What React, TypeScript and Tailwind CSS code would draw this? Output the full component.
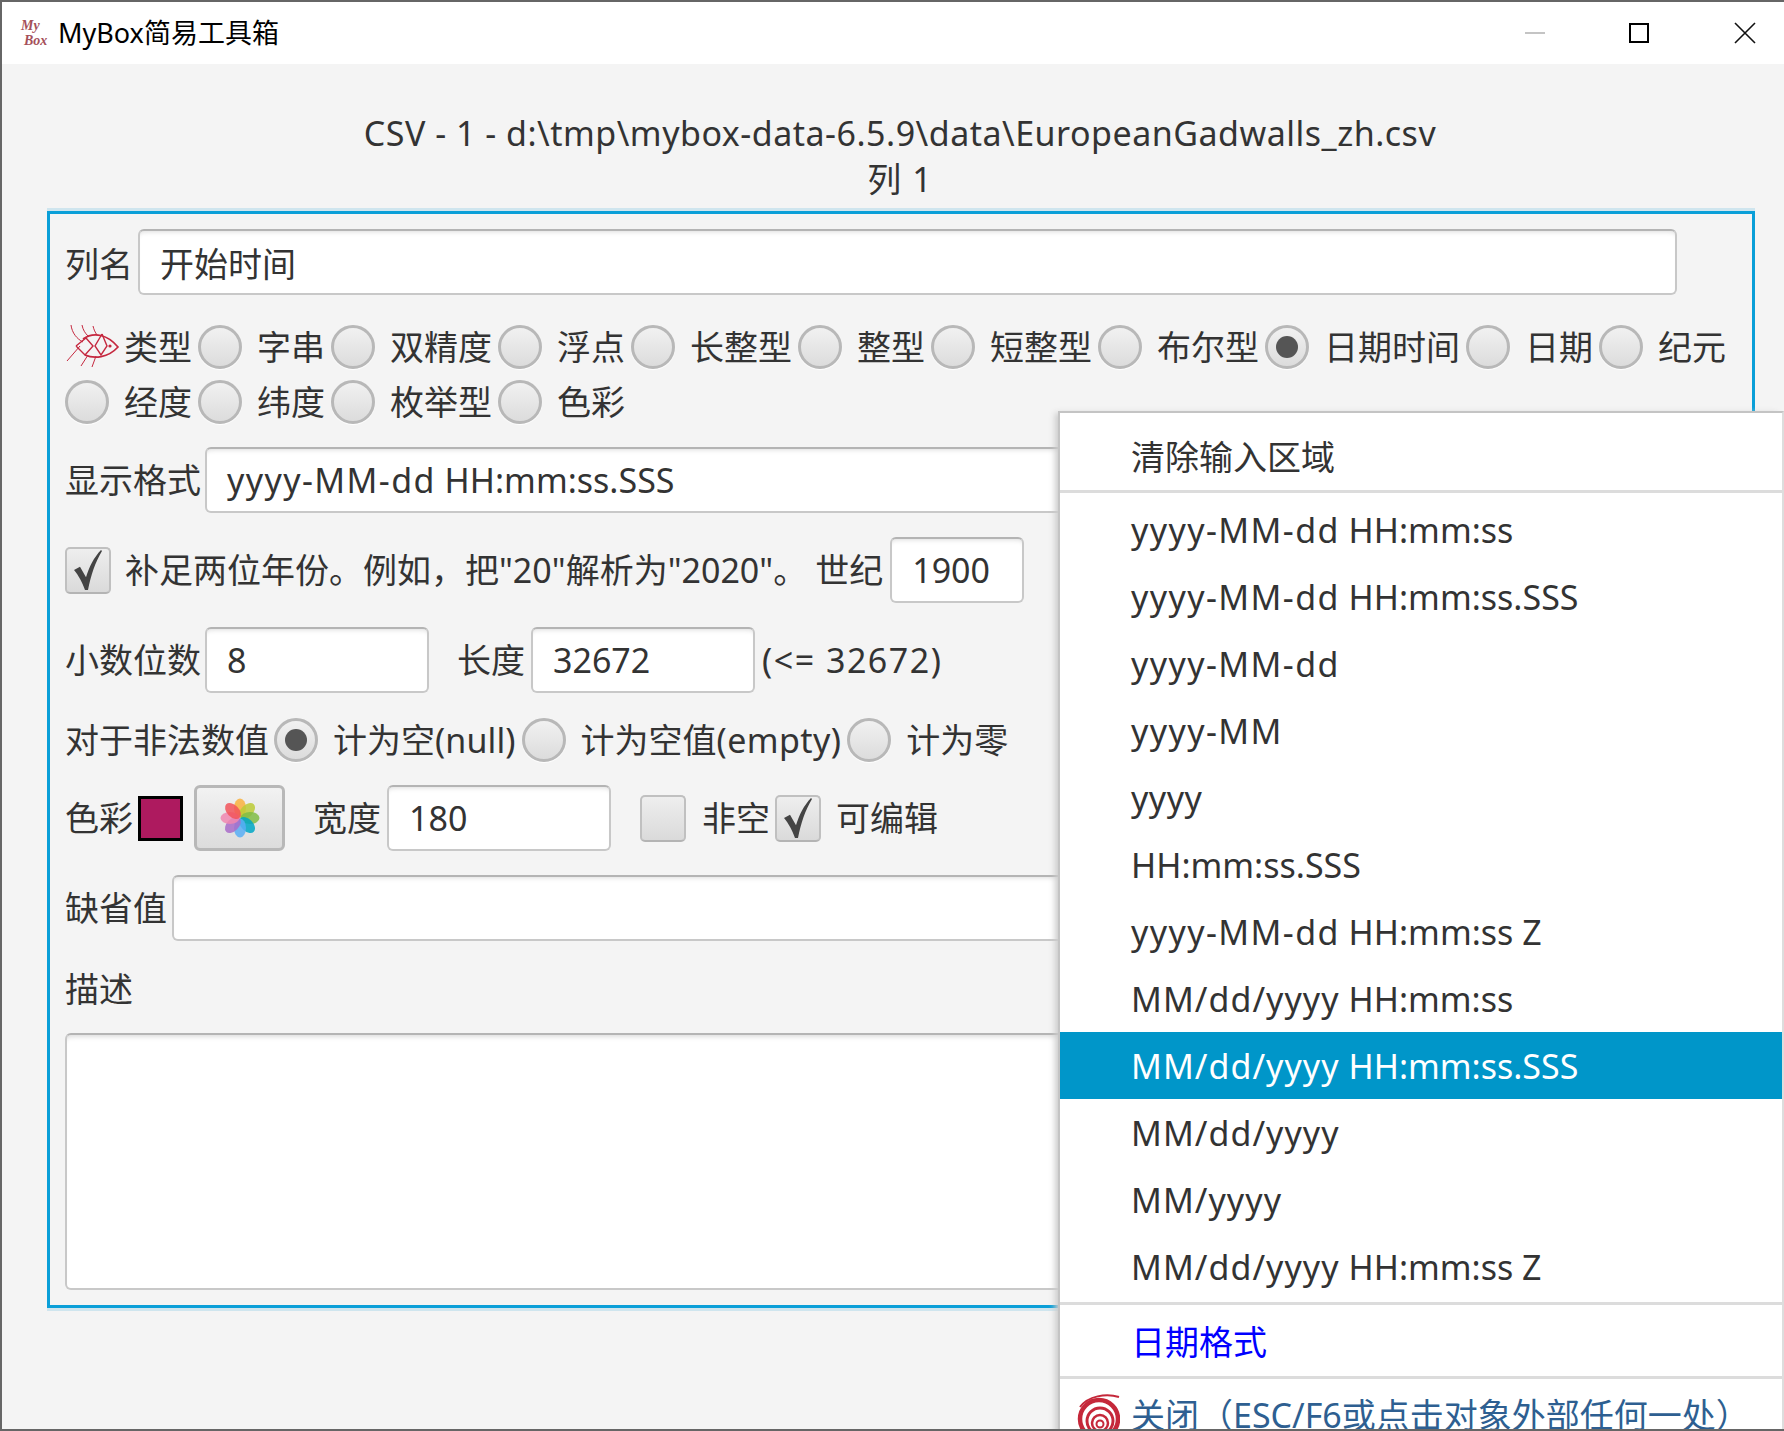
import React from "react";

const inputCls =
  "h-[66px] bg-white rounded-[6px] border-2 border-[#c8c8c8] border-t-[#b4b4b4] shadow-[inset_0_5px_5px_-4px_#dddddd] flex items-center text-[34px] text-[#333333] pl-[20px] shrink-0 whitespace-nowrap overflow-hidden";

function Radio({ on }: { on?: boolean }) {
  return (
    <span className="w-[44px] h-[44px] shrink-0 rounded-full border-[3px] border-[#b8b8b8] bg-gradient-to-b from-[#f1f1f1] to-[#dcdcdc] shadow-[0_1px_1px_#ffffff] flex items-center justify-center">
      {on && <span className="w-[22px] h-[22px] rounded-full bg-[#555555]" />}
    </span>
  );
}

function Check({ on }: { on?: boolean }) {
  return (
    <span className="w-[46px] h-[47px] shrink-0 rounded-[5px] border-2 border-[#c0c0c0] border-b-[#b4b4b4] bg-gradient-to-b from-[#eeeeee] to-[#dadada] flex items-center justify-center">
      {on && (
        <svg width="30" height="40" viewBox="0 0 30 38" preserveAspectRatio="none">
          <path d="M1 19 L7 16 L13 26 C16 16 21 7 28 0 L29 1 C22 12 18 24 15 38 L12 38 C9 30 6 25 1 19 Z" fill="#444444" />
        </svg>
      )}
    </span>
  );
}

function Fish() {
  return (
    <svg width="55" height="47" viewBox="15 15 55 47" fill="none" stroke="#c5283f" className="shrink-0 -my-[2px]">
      <path d="M33 30 C44 22 58 26 68 38 C58 49 44 50 35 46" strokeWidth="1.7" />
      <path d="M26 37 L36 29 L43 37 L35 46 L26 37" strokeWidth="1.4" />
      <path d="M52 25 L45 37 L51 46 L57 37 L52 25" strokeWidth="1.4" />
      <path d="M21 16 C22 24 27 30 33 33 M32 16 C33 21 35 24 38 27 M43 17 C44 21 45 23 47 26" strokeWidth="1" />
      <path d="M17 52 L30 37 M31 57 L38 46 M42 58 L46 47" strokeWidth="1" />
      <circle cx="60" cy="37" r="1.6" fill="#c5283f" stroke="none" />
    </svg>
  );
}

function Flower() {
  const colors = ["#f9b13e", "#bccb36", "#80bc45", "#00a7c6", "#58aef5", "#a96cc9", "#f087b0", "#f2545b"];
  return (
    <svg width="40" height="40" viewBox="-20 -20 40 40">
      {colors.map((c, i) => (
        <ellipse key={c} cx="0" cy="-10" rx="6" ry="9.5" fill={c} fillOpacity="0.85" transform={`rotate(${i * 45})`} />
      ))}
    </svg>
  );
}

function Swirl() {
  return (
    <svg width="44" height="44" viewBox="0 0 44 44" fill="none" stroke="#c5283a" className="shrink-0">
      <path d="M43 4 C30 0 12 3 4 14" strokeWidth="2" />
      <circle cx="23" cy="26" r="19" strokeWidth="4.5" />
      <circle cx="24" cy="28" r="13" strokeWidth="3" />
      <circle cx="24" cy="30" r="8" strokeWidth="2.5" />
      <circle cx="24" cy="31" r="3.5" strokeWidth="2" />
    </svg>
  );
}

const types = ["字串", "双精度", "浮点", "长整型", "整型", "短整型", "布尔型", "日期时间", "日期", "纪元", "经度", "纬度", "枚举型", "色彩"];
const formats = [
  "yyyy-MM-dd HH:mm:ss",
  "yyyy-MM-dd HH:mm:ss.SSS",
  "yyyy-MM-dd",
  "yyyy-MM",
  "yyyy",
  "HH:mm:ss.SSS",
  "yyyy-MM-dd HH:mm:ss Z",
  "MM/dd/yyyy HH:mm:ss",
  "MM/dd/yyyy HH:mm:ss.SSS",
  "MM/dd/yyyy",
  "MM/yyyy",
  "MM/dd/yyyy HH:mm:ss Z",
];

function Format({ f }: { f: string }) {
  const i = f.indexOf(" ");
  const head = i < 0 ? f : f.slice(0, i);
  const tail = i < 0 ? "" : f.slice(i);
  if (head.includes(":")) return <span>{f}</span>;
  const track = head.includes("-")
    ? "tracking-[1.4px]"
    : head.includes("/")
      ? "tracking-[1.05px]"
      : "tracking-[0.5px]";
  return (
    <span className="whitespace-pre">
      <span className={track}>{head}</span>
      {tail}
    </span>
  );
}

export default function App() {
  return (
    <div className="relative w-[1784px] h-[1431px] overflow-hidden flex flex-col bg-[#f4f4f4] border-t-2 border-l-2 border-b-2 border-[#666666] font-['Noto_Sans','Noto_Sans_CJK_SC',sans-serif] text-[34px] leading-[46px] text-[#333333]">
      <header className="h-[62px] shrink-0 bg-white flex items-center text-black">
        <div className="ml-[17px] w-[34px] flex flex-col font-['Liberation_Serif',serif] italic font-bold text-[14px] leading-[15px] text-[#a5505a]">
          <span className="ml-[2px]">My</span>
          <span className="ml-[5px]">Box</span>
        </div>
        <span className="ml-[5px] text-[27px] leading-[36px]">MyBox简易工具箱</span>
        <div className="ml-auto flex items-center">
          <span className="w-[20px] h-[2px] bg-[#c4c4c4] mr-[84px]" />
          <span className="w-[20px] h-[20px] border-2 border-black mr-[85px]" />
          <svg width="22" height="22" viewBox="0 0 22 22" className="mr-[28px]" stroke="#111111" strokeWidth="1.6">
            <path d="M1 1 L21 21 M21 1 L1 21" />
          </svg>
        </div>
      </header>

      <main className="flex-1 flex flex-col pt-[46px]">
        <div className="text-center pl-[14px] tracking-[0.5px]">CSV - 1 - d:\tmp\mybox-data-6.5.9\data\EuropeanGadwalls_zh.csv</div>
        <div className="text-center pl-[14px] tracking-[1px]">列 1</div>
        <section className="mt-[9px] ml-[45px] w-[1708px] h-[1097px] border-[3px] border-[#0a9fd8] shadow-[0_-3px_0_#cfe5ee,0_3px_0_#cfe5ee] px-[15px] pt-[15px] flex flex-col">
          <div className="flex items-center gap-[5px]">
            <span className="pt-[3px]">列名</span>
            <div className={inputCls + " w-[1539px] pt-[3px]"}>开始时间</div>
          </div>

          <div className="mt-[30px] flex flex-wrap gap-y-[11px] items-center">
            <div className="flex items-center mr-[6px]">
              <Fish />
              <span className="ml-[4px] leading-[44px]">类型</span>
            </div>
            {types.map((t) => (
              <div key={t} className="flex items-center mr-[6px]">
                <Radio on={t === "日期时间"} />
                <span className="ml-[15px] leading-[44px]">{t}</span>
              </div>
            ))}
          </div>

          <div className="mt-[23px] flex items-center gap-[4px]">
            <span>显示格式</span>
            <div className={inputCls + " w-[1474px]"}>
              <Format f="yyyy-MM-dd HH:mm:ss.SSS" />
            </div>
          </div>

          <div className="mt-[24px] flex items-center">
            <Check on />
            <span className="ml-[14px] whitespace-nowrap">补足两位年份。例如，把"20"解析为"2020"。<span className="ml-[8px]">世纪</span></span>
            <div className={inputCls + " w-[134px] ml-[7px]"}>1900</div>
          </div>

          <div className="mt-[24px] flex items-center">
            <span>小数位数</span>
            <div className={inputCls + " w-[224px] ml-[4px]"}>8</div>
            <span className="ml-[28px]">长度</span>
            <div className={inputCls + " w-[224px] ml-[6px]"}>32672</div>
            <span className="ml-[7px] whitespace-nowrap tracking-[1.5px]">(&lt;= 32672)</span>
          </div>

          <div className="mt-[25px] flex items-center leading-[44px]">
            <span>对于非法数值</span>
            <span className="ml-[5px]"><Radio on /></span>
            <span className="ml-[15px] whitespace-nowrap">计为空<span className="tracking-[0.1px]">(null)</span></span>
            <span className="ml-[6px]"><Radio /></span>
            <span className="ml-[15px] whitespace-nowrap">计为空值<span className="tracking-[0.4px]">(empty)</span></span>
            <span className="ml-[6px]"><Radio /></span>
            <span className="ml-[15px]">计为零</span>
          </div>

          <div className="mt-[23px] flex items-center">
            <span>色彩</span>
            <span className="ml-[5px] w-[45px] h-[45px] bg-[#ae1a5f] border-[3px] border-black shrink-0" />
            <button className="ml-[11px] w-[91px] h-[66px] rounded-[6px] border-[3px] border-[#b8b8b8] bg-gradient-to-b from-[#f2f2f2] to-[#dcdcdc] flex items-center justify-center">
              <Flower />
            </button>
            <span className="ml-[28px]">宽度</span>
            <div className={inputCls + " w-[224px] ml-[6px]"}>180</div>
            <span className="ml-[29px]"><Check /></span>
            <span className="ml-[16px]">非空</span>
            <span className="ml-[5px]"><Check on /></span>
            <span className="ml-[15px]">可编辑</span>
          </div>

          <div className="mt-[24px] flex items-center gap-[5px]">
            <span>缺省值</span>
            <div className={inputCls + " w-[1505px]"} />
          </div>

          <div className="mt-[25px]">描述</div>

          <div className="mt-[21px] h-[257px] w-[1612px] bg-white rounded-[6px] border-2 border-[#c8c8c8] border-t-[#b4b4b4] shadow-[inset_0_6px_5px_-4px_#dddddd]" />
        </section>
      </main>

      <aside className="absolute left-[1056px] top-[409px] right-0 h-[1030px] bg-white border-l-2 border-t-2 border-r-2 border-[#c4c4c4] border-r-[#dddddd] shadow-[-5px_0_6px_-2px_#cccccc] pt-[10px]">
        <div className="h-[67px] flex items-center pl-[71px]">清除输入区域</div>
        <div className="h-[3px] bg-[#dcdcdc] mb-[3px]" />
        {formats.map((f) => (
          <div
            key={f}
            className={
              "h-[67px] flex items-center pl-[71px] whitespace-nowrap " +
              (f === "MM/dd/yyyy HH:mm:ss.SSS" ? "bg-[#0096c9] text-white" : "")
            }
          >
            <Format f={f} />
          </div>
        ))}
        <div className="h-[3px] bg-[#dcdcdc] mt-[2px]" />
        <div className="h-[71px] flex items-center pl-[71px] pt-[2px] text-[#0000ff]">日期格式</div>
        <div className="h-[3px] bg-[#dcdcdc]" />
        <div className="h-[68px] flex items-center pl-[16px] pt-[4px] text-[#2e5f91] whitespace-nowrap">
          <Swirl />
          <span className="ml-[11px]">关闭（ESC/F6或点击对象外部任何一处）</span>
        </div>
      </aside>
    </div>
  );
}
